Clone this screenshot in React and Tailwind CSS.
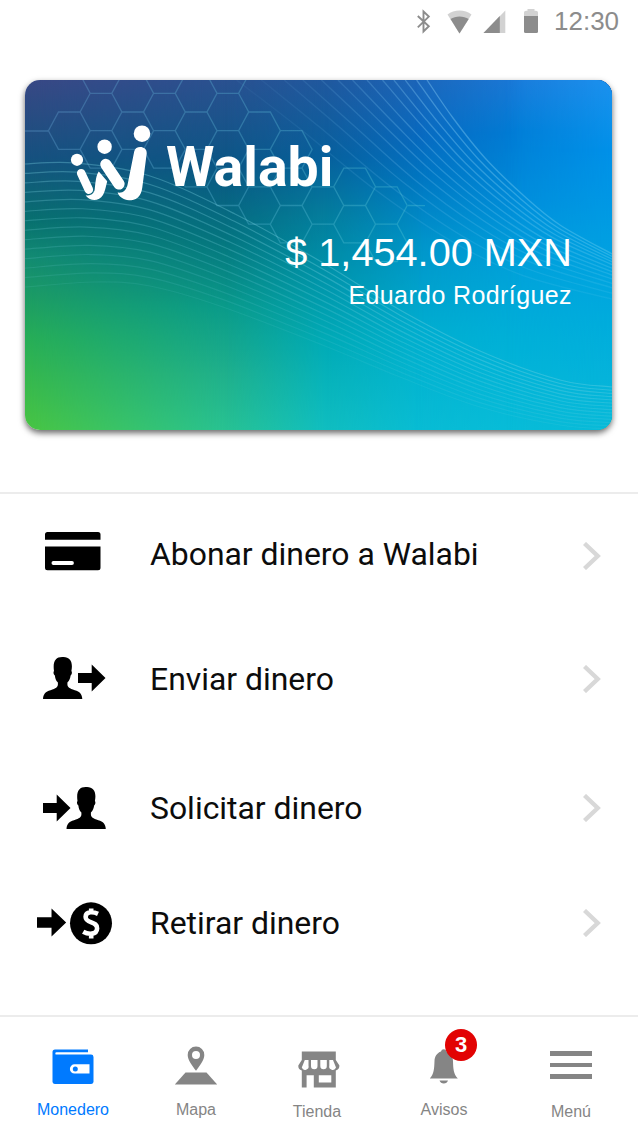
const HEX_SIDE = 21.6;
const COL = 31.7;
const ROW = 37.4;

const HEXES = [
  [-1, 0],
  [0, -1], [0, 0], [0, 1],
  [1, -1], [1, 0],
  [2, -1], [2, 0], [2, 1],
  [3, -1], [3, 0], [3, 1],
  [4, -1], [4, 0], [4, 1], [4, 2],
  [5, 0], [5, 1], [5, 2],
  [6, 1], [6, 2], [6, 3],
  [7, 2],
  [8, 2], [8, 3],
  [9, 2], [9, 3],
];

function hexPath([c, r]) {
  const odd = Math.abs(c) % 2 === 1;
  const cx = 76 + c * COL;
  const cy = 32 + r * ROW + (odd ? ROW / 2 : 0);
  const s = HEX_SIDE;
  const h = ROW / 2;
  const w = COL - s / 2;
  return `M${cx - s / 2} ${cy - h}h${s}L${cx + w} ${cy}L${cx + s / 2} ${cy + h}h${-s}L${cx - w} ${cy}Z`;
}

function smooth(points) {
  let d = `M${points[0][0]} ${points[0][1]}`;
  for (let i = 0; i < points.length - 1; i++) {
    const p0 = points[i - 1] || points[i];
    const p1 = points[i];
    const p2 = points[i + 1];
    const p3 = points[i + 2] || p2;
    d += `C${p1[0] + (p2[0] - p0[0]) / 6} ${p1[1] + (p2[1] - p0[1]) / 6} ${p2[0] - (p3[0] - p1[0]) / 6} ${p2[1] - (p3[1] - p1[1]) / 6} ${p2[0]} ${p2[1]}`;
  }
  return d;
}

const LOW_TOP = [[0, 84], [50, 83], [125, 96], [210, 134], [300, 184], [375, 230], [455, 271], [535, 300], [587, 307]];
const LOW_BOTTOM = [[0, 207], [70, 202], [125, 206], [195, 226], [300, 266], [375, 297], [455, 327], [535, 345], [587, 349]];
const HIGH_TOP = [[402, 0], [428, 38], [460, 78], [498, 115], [535, 145], [587, 174]];
const HIGH_BOTTOM = [[195, 0], [262, 50], [340, 112], [420, 165], [495, 200], [587, 223]];
const HIGH_T = [0, 0.05, 0.105, 0.16, 0.215, 0.29, 0.36, 0.43, 0.51, 0.6, 0.69, 0.8, 0.92];

function between(a, b, t) {
  return smooth(a.map((p, i) => [p[0] + (b[i][0] - p[0]) * t, p[1] + (b[i][1] - p[1]) * t]));
}

function CardArt() {
  return (
    <>
      <div className="col-start-1 row-start-1 bg-[linear-gradient(180deg,#394885_0%,#16517f_22%,#08706f_40%,#128a72_50%,#27ae56_74%,#49c542_100%)]" />
      <div className="col-start-1 row-start-1 bg-[linear-gradient(180deg,#2a5190_0%,#0b5685_24%,#04747f_45%,#0a9b8a_65%,#1fb08c_84%,#28c292_100%)] [mask-image:linear-gradient(90deg,transparent_0,#000_200px)]" />
      <div className="col-start-1 row-start-1 bg-[linear-gradient(180deg,#20589e_0%,#07609c_22%,#047c9c_38%,#008fa8_52%,#00aab6_74%,#10bec0_100%)] [mask-image:linear-gradient(90deg,transparent_200px,#000_300px)]" />
      <div className="col-start-1 row-start-1 bg-[linear-gradient(180deg,#1c66ba_0%,#086ac0_16%,#0076c2_28%,#0095ca_47%,#00aed0_72%,#08bcd4_100%)] [mask-image:linear-gradient(90deg,transparent_300px,#000_400px)]" />
      <div className="col-start-1 row-start-1 bg-[linear-gradient(180deg,#1a7ad9_0%,#007dd6_15%,#008cda_34%,#009fdb_50%,#00b0d8_74%,#08bcd8_100%)] [mask-image:linear-gradient(90deg,transparent_390px,#000_500px)]" />
      <div className="col-start-1 row-start-1 bg-[linear-gradient(180deg,#1c91ee_0%,#0090e8_20%,#009ee2_45%,#00acdc_70%,#08bad8_100%)] [mask-image:linear-gradient(90deg,transparent_480px,#000_587px)]" />
      <svg className="z-10 col-start-1 row-start-1" width="587" height="350" viewBox="0 0 587 350" fill="none" aria-hidden="true">
        <defs>
          <linearGradient id="hexFade" gradientUnits="userSpaceOnUse" x1="0" y1="0" x2="380" y2="200">
            <stop offset="0" stopColor="#5c92c4" stopOpacity=".42" />
            <stop offset="1" stopColor="#4cc4d4" stopOpacity=".38" />
          </linearGradient>
          <linearGradient id="highFade" gradientUnits="userSpaceOnUse" x1="240" y1="0" x2="587" y2="180">
            <stop offset="0" stopColor="#7cc4f0" stopOpacity=".16" />
            <stop offset=".4" stopColor="#7cc4f0" stopOpacity=".45" />
            <stop offset="1" stopColor="#5cc8ee" stopOpacity=".45" />
          </linearGradient>
        </defs>
        <g stroke="url(#hexFade)" strokeWidth="1.3">
          <path d={HEXES.map(hexPath).join("")} />
          <path d="M0 51H23M383 125.5l17 .1" />
        </g>
        {Array.from({ length: 14 }, (_, i) => (
          <path key={i} d={between(LOW_TOP, LOW_BOTTOM, i / 13)} stroke="#7ed6e4" strokeWidth="1.2" strokeOpacity={0.34 - i * 0.018} />
        ))}
        {HIGH_T.map((t, i) => (
          <path key={t} d={between(HIGH_TOP, HIGH_BOTTOM, t)} stroke="url(#highFade)" strokeWidth="1.3" strokeOpacity={1 - i * 0.055} />
        ))}
      </svg>
    </>
  );
}

function Logo() {
  return (
    <svg width="84" height="80" viewBox="70 123 84 80" fill="#fff" aria-hidden="true">
      <circle cx="77" cy="159.8" r="6.1" />
      <circle cx="104.6" cy="146.7" r="7.2" />
      <circle cx="142" cy="133.7" r="8.3" />
      <path d="M81.2 173.2L88.8 189.6" stroke="#fff" strokeWidth="8.6" strokeLinecap="round" />
      <path d="M98.8 171.500L107.2 181.2C105.5 188 105 191.500 102.800 195.300C100.200 200 94 201.200 89.800 198.900C87.600 197.800 86 196.200 85.700 195.200C91.500 196.200 94.600 193 94.800 188.600C95.500 182.500 96 175 98.800 171.500Z" />
      <path d="M105.800 164.400L119 184" stroke="#fff" strokeWidth="11.2" strokeLinecap="round" />
      <path d="M134.200 151.500C135.400 145 147.300 145.700 146.700 153.500L142.300 187.500C141 197.500 135.500 200.300 129 200.300C123.500 200.300 119 196.600 117.600 192.600C122.800 193.500 126.500 190 127.600 184.500Z" />
    </svg>
  );
}

function CreditCard() {
  return (
    <svg width="56" height="39" viewBox="0 0 56 39" aria-hidden="true">
      <path fillRule="evenodd" d="M2.500 0h50.500a2.500 2.500 0 0 1 2.500 2.500V7.800H0V2.500A2.500 2.500 0 0 1 2.500 0ZM0 14.500h55.500V35.700a2.500 2.500 0 0 1-2.500 2.500H2.500A2.500 2.500 0 0 1 0 35.700ZM8.400 29.100a1.900 1.900 0 0 0 0 3.800H27a1.900 1.900 0 0 0 0-3.800Z" />
    </svg>
  );
}

const PERSON = "M0 42C.3 37 2.500 34.600 7.500 33.200C13 31.500 14.700 30.200 14.900 27.500V25.500C12.700 23.500 12.200 21.500 11.900 18.600C10.600 17.500 10 15.500 11 14.100C9.600 4.500 12.500 0 19.200 0C26.800-.3 30.300 4.200 28.400 14.100C29.400 15.500 28.800 17.500 27.600 18.600C27.200 21.500 26.500 23.500 24.400 25.500V27.500C24.600 30.200 26.400 31.500 31.800 33.200C36.800 34.600 39 37 39.300 42Z";
const ARROW = "M0 8.500H13.700V0L27.500 13.500L13.700 27V18.500H0Z";

function SendMoney() {
  return (
    <svg width="63" height="42" viewBox="0 0 63 42" aria-hidden="true">
      <path d={PERSON} />
      <path transform="translate(35 7.500)" d={ARROW} />
    </svg>
  );
}

function RequestMoney() {
  return (
    <svg width="64" height="42" viewBox="0 0 64 42" aria-hidden="true">
      <path d={ARROW} transform="translate(0 7.500)" />
      <path d={PERSON} transform="translate(23.500 0)" />
    </svg>
  );
}

function WithdrawMoney() {
  return (
    <svg width="76" height="43" viewBox="0 0 76 43" aria-hidden="true">
      <path d={ARROW} transform="translate(0 6.500) scale(1.060 1.040)" />
      <circle cx="54" cy="21.300" r="21" />
      <path d="M61 11.800C56.500 9.700 48.800 9 48.600 14.800C48.500 22 60.500 18.700 60.100 26.300C59.800 33.200 51 32.500 46.200 29.700M54.200 6.600V11M54.200 31V36.400" fill="none" stroke="#fff" strokeWidth="4.600" />
    </svg>
  );
}

function Chevron() {
  return (
    <svg width="18" height="28" viewBox="0 0 18 28" fill="none" stroke="#d8d8d8" strokeWidth="4.400" aria-hidden="true">
      <path d="M1.500 1.500L14.700 14L1.500 26.500" />
    </svg>
  );
}

function ListRow({ icon, label, className, labelClass = "pt-[2px]" }) {
  return (
    <button className={`flex w-full items-center text-left ${className}`}>
      <span className="flex w-[150px] shrink-0">{icon}</span>
      <span className={`flex-1 font-[Roboto,sans-serif] text-[31.900px] leading-none whitespace-nowrap text-[#0c0c0c] ${labelClass}`}>{label}</span>
      <span className="mr-[37px]"><Chevron /></span>
    </button>
  );
}

function NavItem({ label, icon, className = "", labelClass = "pt-[11px]" }) {
  return (
    <button className={`flex flex-col items-center ${className}`}>
      <span className="flex h-[72px] items-end">{icon}</span>
      <span className={`text-[16px] leading-[20px] ${labelClass}`}>{label}</span>
    </button>
  );
}

function StatusBar() {
  return (
    <header className="flex h-11 items-center pl-[415px] text-[#8c8c8c]">
      <svg width="130" height="28" viewBox="415 8 130 28" fill="none" aria-hidden="true">
        <path d="M417.800 16L428.800 26.300L423.500 31.500V11.500L428.800 16.600L417.800 27.400" stroke="#8c8c8c" strokeWidth="1.900" />
        <path d="M447.500 14.500C454 9 465 9 471.500 14.500L459.500 33.500Z" fill="#d2d2d2" />
        <path d="M450.500 19C455.500 15.500 463.500 15.500 468.700 19L459.500 33.500Z" fill="#8c8c8c" />
        <path d="M483.500 33L505.300 10.500V33Z" fill="#d2d2d2" />
        <path d="M483.500 33L499.800 16V33Z" fill="#8c8c8c" />
        <path d="M524 17V12.500Q524 10.700 526 10.700H527.500V9H534.500V10.700H536Q538 10.700 538 12.500V17Z" fill="#d2d2d2" />
        <path d="M524 16H538V31.500Q538 33 536.500 33H525.500Q524 33 524 31.500Z" fill="#8c8c8c" />
      </svg>
      <time className="pb-[3px] pl-[9px] text-[26px] leading-none">12:30</time>
    </header>
  );
}

function WalletIcon() {
  return (
    <svg className="mb-1" width="42" height="36" viewBox="0 0 42 36" aria-hidden="true">
      <path fill="#007aff" fillRule="evenodd" d="M3 .5H36V3.200H4.500A1.200 1.200 0 0 0 4.500 5.600H39A2.500 2.500 0 0 1 41.500 8V33A2.500 2.500 0 0 1 39 35H3A2.500 2.500 0 0 1 .5 33V3A2.500 2.500 0 0 1 3 .5ZM22.500 15.300A4.600 4.600 0 0 0 22.500 24.500H37.500V15.300Z" />
      <circle cx="23.300" cy="19.900" r="2.500" fill="#007aff" />
    </svg>
  );
}

function MapIcon() {
  return (
    <svg className="mb-1" width="44" height="39" viewBox="0 0 44 39" fill="#858585" aria-hidden="true">
      <path d="M11.500 26.500H32.500L43.200 38.500H.8Z" />
      <path fillRule="evenodd" stroke="#fff" strokeWidth="1.200" paintOrder="stroke" d="M22 .5A8.300 8.300 0 0 0 13.700 8.900C13.700 14 18.500 20 22 24.800C25.500 20 30.300 14 30.300 8.900A8.300 8.300 0 0 0 22 .5ZM22 5A4 4 0 1 1 22 13A4 4 0 1 1 22 5Z" />
    </svg>
  );
}

function StoreIcon() {
  return (
    <svg className="mb-px ml-[3px]" width="42" height="37" viewBox="0 0 42 37" aria-hidden="true">
      <path fill="#858585" fillRule="evenodd" d="M3.800.5H37.800V9L41.400 14.500Q41.500 18.500 37.800 19.500V36.500H3.800V19.500Q0 18.500 .3 14.500L3.800 9ZM8.600 24.300V36.500H15.800V24.300ZM20.800 24.300V31.500H33.300V24.300Z" />
      <path fill="#fff" d="M6.800 9H10.500V14.500A3.500 3.500 0 0 1 3.800 16.500ZM13 9H19.500V15A3.250 3.250 0 0 1 13 15ZM22.300 9H28.800V15A3.250 3.250 0 0 1 22.300 15ZM31.300 9H35L38 16.500A3.500 3.500 0 0 1 31.300 14.500Z" />
    </svg>
  );
}

function BellIcon() {
  return (
    <span className="relative mb-[5px] block">
      <svg width="30" height="37" viewBox="0 0 30 37" fill="#858585" aria-hidden="true">
        <path d="M12 4.500A2.800 2.800 0 0 1 17.500 4.500C21.500 5.800 23.800 9.500 24 14C24.200 22 24.500 27 28.800 31.500H.8C5 27 5.200 22 5.500 14C5.700 9.500 8 5.800 12 4.500ZM10.500 33.500H19Q18 36.500 14.800 36.500T10.500 33.500Z" />
      </svg>
      <span className="absolute -top-[18px] left-[16px] flex size-8 items-center justify-center rounded-full bg-[#e20303] text-[22px] leading-none font-bold text-white">3</span>
    </span>
  );
}

function MenuIcon() {
  return (
    <span className="mb-[10px] flex w-[42px] flex-col gap-[7px]">
      <span className="h-[4.660px] bg-[#858585]" />
      <span className="h-[4.660px] bg-[#858585]" />
      <span className="h-[4.660px] bg-[#858585]" />
    </span>
  );
}

export default function App() {
  return (
    <div className="flex h-[1140px] w-[640px] flex-col overflow-hidden bg-white font-['Liberation_Sans',Arial,sans-serif]">
      <StatusBar />
      <section className="isolate mt-9 ml-[25px] grid h-[350px] w-[587px] shrink-0 overflow-hidden rounded-[15px] shadow-[0_3px_6px_rgba(0,0,0,0.6)]">
        <CardArt />
        <div className="z-20 col-start-1 row-start-1 flex flex-col text-white">
          <div className="mt-[43px] ml-[45px] flex h-20 items-center">
            <Logo />
            <h1 className="ml-3 pt-[10px] font-[Roboto,sans-serif] text-[55.400px] leading-none font-bold">Walabi</h1>
          </div>
          <p className="mt-[27px] mr-10 text-right text-[39.700px] leading-[44px]">$ 1,454.00 MXN</p>
          <p className="mt-[6px] mr-10 text-right text-[25px] leading-[30px] tracking-[0.400px]">Eduardo Rodríguez</p>
        </div>
      </section>
      <main className="mt-[62px] mr-[2px] h-[525px] shrink-0 border-y-2 border-[#ececec]">
        <ListRow className="h-[123px]" labelClass="pb-px" label="Abonar dinero a Walabi" icon={<span className="mb-2 ml-[45px]"><CreditCard /></span>} />
        <ListRow className="h-[124px]" label="Enviar dinero" icon={<span className="mb-[2px] ml-[43px]"><SendMoney /></span>} />
        <ListRow className="h-[134px]" label="Solicitar dinero" icon={<span className="ml-[43px]"><RequestMoney /></span>} />
        <ListRow className="h-[96px]" label="Retirar dinero" icon={<span className="ml-[37px]"><WithdrawMoney /></span>} />
      </main>
      <nav className="grid flex-1 grid-cols-[122px_124px_118px_136px_118px] pl-3 text-[#858585]">
        <NavItem className="text-[#007aff]" label="Monedero" icon={<WalletIcon />} />
        <NavItem label="Mapa" icon={<MapIcon />} />
        <NavItem label="Tienda" labelClass="pt-[13px]" icon={<StoreIcon />} />
        <NavItem label="Avisos" icon={<BellIcon />} />
        <NavItem label="Menú" labelClass="pt-[13px]" icon={<MenuIcon />} />
      </nav>
    </div>
  );
}
